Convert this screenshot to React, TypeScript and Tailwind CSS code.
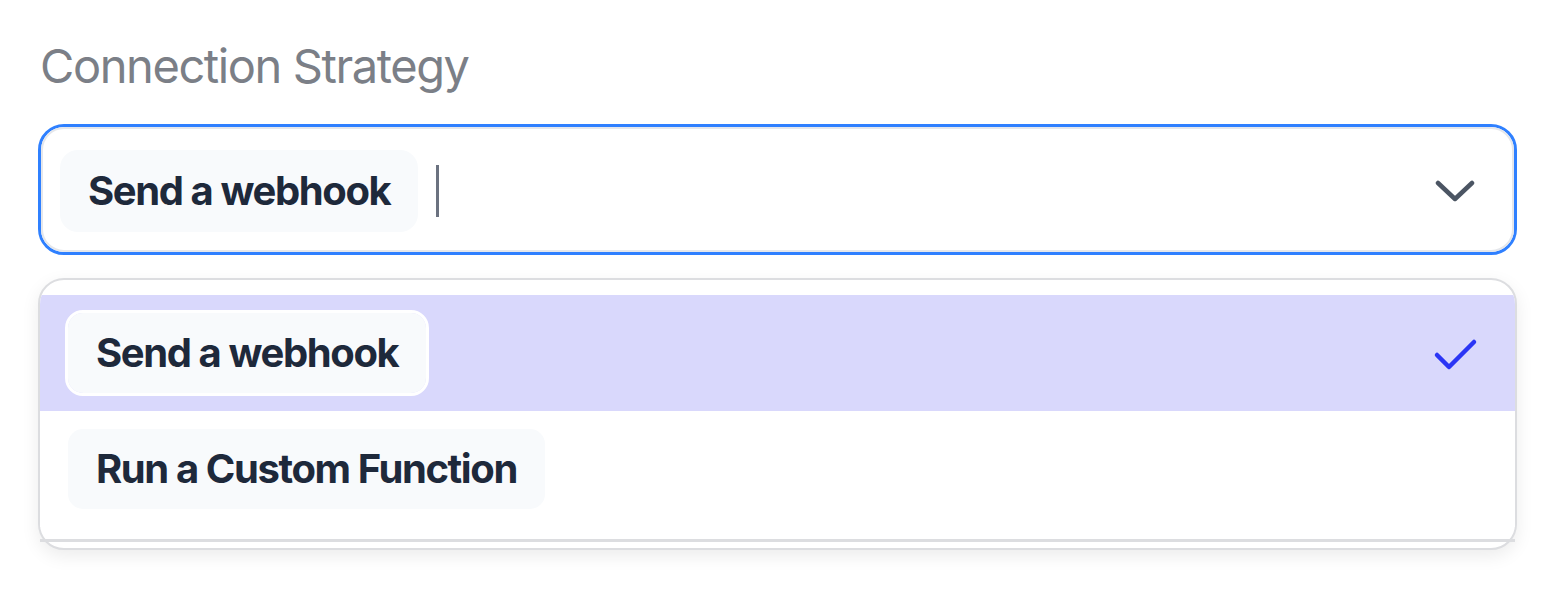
import React from 'react';

const options = ['Send a webhook', 'Run a Custom Function'];

const Chip: React.FC<{ label: string; selected?: boolean }> = ({ label, selected }) => (
  <span
    className={`inline-flex h-[86px] items-center rounded-[18px] border-[3px] bg-[#f8fafc] bg-clip-padding px-[28px] text-[40px] font-bold tracking-[-0.035em] text-[#1e293b] ${
      selected ? 'border-white' : 'border-transparent'
    }`}
  >
    {label}
  </span>
);

export default function App() {
  const selected = options[0];

  return (
    <div
      className="min-h-screen bg-white pl-[37px] pt-[34px]"
      style={{ fontFamily: 'Inter, "Noto Sans", sans-serif' }}
    >
      <div className="w-[1480px]">
        {/* Label */}
        <div className="pl-[3px] text-[47px] leading-[64px] tracking-[-0.03em] text-[#7b7f87]">
          Connection Strategy
        </div>

        {/* Select input */}
        <div className="mt-[26px] ml-[1px] flex h-[131px] items-center rounded-[26px] border-[3px] border-[#2f80ff] bg-white">
          <div className="flex h-full flex-1 items-center rounded-[23px] border-2 border-[#e5e7eb] pl-[17px] pr-[37px] pt-[2px]">
            <span className="inline-flex h-[82px] items-center rounded-[18px] bg-[#f8fafc] px-[28px] text-[40px] font-bold tracking-[-0.035em] text-[#1e293b]">
              {selected}
            </span>
            <span className="ml-[18px] h-[52px] w-[3px] bg-[#6b7280]" />
            <div className="flex-1" />
            <svg width="40" height="24" viewBox="0 0 40 24" fill="none">
              <path d="M3 4 L20 20 L37 4" stroke="#4b5563" strokeWidth="4.5" strokeLinecap="round" strokeLinejoin="round" />
            </svg>
          </div>
        </div>

        {/* Dropdown */}
        <div className="mt-[23px] ml-[1px] rounded-[26px] border-2 border-[#dcdde0] bg-white shadow-[0_6px_18px_rgba(0,0,0,0.08)]">
          <div className="overflow-hidden rounded-t-[24px] border-b-[3px] border-[#dcdde0] pt-[15px] pb-[12px]">
            {options.map((opt) => {
              const isSel = opt === selected;
              return (
                <div
                  key={opt}
                  className={`flex h-[116px] items-center pl-[25px] pr-[36px] ${isSel ? 'bg-[#d9d8fc]' : 'bg-white'}`}
                >
                  <Chip label={opt} selected={isSel} />
                  <div className="flex-1" />
                  {isSel && (
                    <svg width="46" height="36" viewBox="0 0 46 36" fill="none" className="mt-[4px]">
                      <path d="M4 18 L16 30 L41 5" stroke="#2b35f5" strokeWidth="4.5" strokeLinecap="round" strokeLinejoin="round" />
                    </svg>
                  )}
                </div>
              );
            })}
          </div>
          <div className="h-[6px]" />
        </div>
      </div>
    </div>
  );
}
